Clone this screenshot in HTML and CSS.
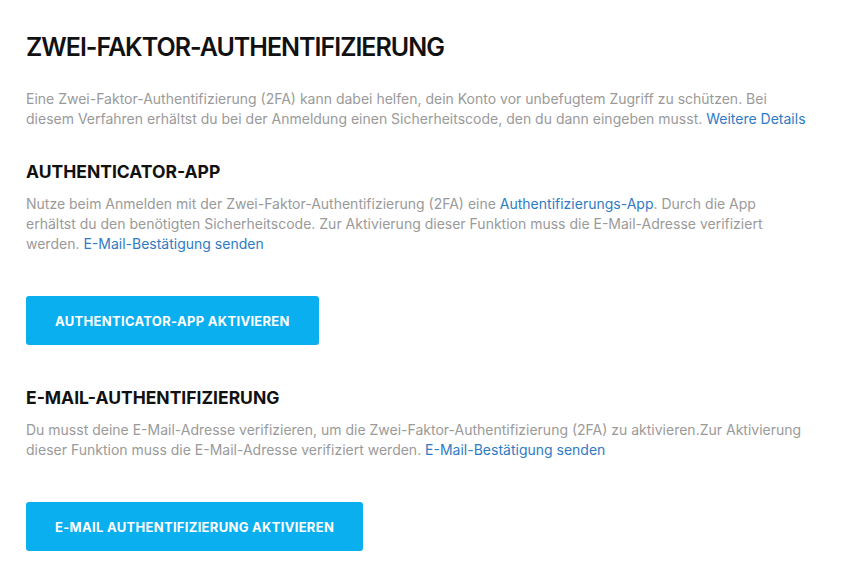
FILE: index.html
```html
<!DOCTYPE html>
<html lang="de">
<head>
    <meta charset="UTF-8">
    <meta name="viewport" content="width=device-width, initial-scale=1.0">
    <title>Zwei-Faktor-Authentifizierung</title>
    <link rel="stylesheet" href="styles.css">
</head>
<body>
    <div id="two-factor">
        <h1>Zwei-Faktor-Authentifizierung</h1>
        <p class="intro">Eine Zwei-Faktor-Authentifizierung (2FA) kann dabei helfen, dein Konto vor unbefugtem Zugriff zu schützen. Bei diesem Verfahren erhältst du bei der Anmeldung einen Sicherheitscode, den du dann eingeben musst. <a href="#">Weitere Details</a></p>

        <div class="method">
            <h2>Authenticator-App</h2>
            <p>Nutze beim Anmelden mit der Zwei-Faktor-Authentifizierung (2FA) eine <a href="#">Authentifizierungs-App</a>. Durch die App erhältst du den benötigten Sicherheitscode. Zur Aktivierung dieser Funktion muss die E-Mail-Adresse verifiziert werden. <a href="#">E-Mail-Bestätigung senden</a></p>
            <button type="button">Authenticator-App aktivieren</button>
        </div>

        <div class="method">
            <h2>E-Mail-Authentifizierung</h2>
            <p>Du musst deine E-Mail-Adresse verifizieren, um die Zwei-Faktor-Authentifizierung (2FA) zu aktivieren.Zur Aktivierung dieser Funktion muss die E-Mail-Adresse verifiziert werden. <a href="#">E-Mail-Bestätigung senden</a></p>
            <button type="button">E-Mail Authentifizierung aktivieren</button>
        </div>
    </div>
</body>
</html>
```

FILE: styles.css
```css
body {
    margin: 0;
    padding: 0;
    background-color: #fff;
    font-family: "Inter", "Noto Sans", sans-serif;
}
#two-factor {
    padding: 30px 26px 0;
    max-width: 800px;
}
#two-factor h1 {
    margin: 0 0 25px;
    font-size: 25px;
    line-height: 34px;
    font-weight: 600;
    letter-spacing: -1px;
    color: #111;
    text-transform: uppercase;
}
#two-factor h2 {
    margin: 0 0 10px;
    font-size: 17.5px;
    line-height: 24px;
    font-weight: 700;
    color: #111;
    text-transform: uppercase;
}
#two-factor p {
    margin: 0;
    font-size: 14px;
    line-height: 20px;
    color: #9a9a9a;
}
#two-factor .intro {
    max-width: 786px;
    line-height: 19.5px;
    margin-bottom: 32px;
}
#two-factor .method p {
    max-width: 776px;
}
#two-factor a {
    color: #2f7bc4;
    text-decoration: none;
}
.method {
    margin-bottom: 41px;
}
.method button {
    margin-top: 42px;
    height: 49px;
    padding: 0 29px;
    border: none;
    border-radius: 3px;
    background-color: #0aaff0;
    color: #fff;
    font-family: inherit;
    font-size: 13px;
    font-weight: 700;
    letter-spacing: 0.3px;
    text-transform: uppercase;
    cursor: pointer;
}
```
